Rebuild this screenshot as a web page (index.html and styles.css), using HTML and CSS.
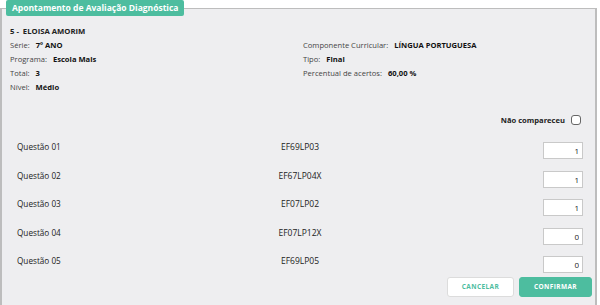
FILE: index.html
```html
<!DOCTYPE html>
<html lang="pt-BR">
<head>
    <meta charset="UTF-8">
    <title>Apontamento de Avaliação Diagnóstica</title>
    <link rel="stylesheet" href="styles.css">
</head>
<body>
    <fieldset class="panel">
        <legend class="panel-title">Apontamento de Avaliação Diagnóstica</legend>

        <div class="student">5 - &nbsp;ELOISA AMORIM</div>

        <div class="info">
            <div class="info-col">
                <div class="info-item"><span class="lbl">Série:</span><b>7º ANO</b></div>
                <div class="info-item"><span class="lbl">Programa:</span><b>Escola Mais</b></div>
                <div class="info-item"><span class="lbl">Total:</span><b>3</b></div>
                <div class="info-item"><span class="lbl">Nível:</span><b>Médio</b></div>
            </div>
            <div class="info-col">
                <div class="info-item"><span class="lbl">Componente Curricular:</span><b>LÍNGUA PORTUGUESA</b></div>
                <div class="info-item"><span class="lbl">Tipo:</span><b>Final</b></div>
                <div class="info-item"><span class="lbl">Percentual de acertos:</span><b>60,00 %</b></div>
            </div>
        </div>

        <div class="absent">
            <label for="absent">Não compareceu</label>
            <input type="checkbox" id="absent">
        </div>

        <div class="questions">
            <div class="q-row">
                <span class="q-name">Questão 01</span>
                <span class="q-code">EF69LP03</span>
                <input class="q-input" type="text" value="1">
            </div>
            <div class="q-row">
                <span class="q-name">Questão 02</span>
                <span class="q-code">EF67LP04X</span>
                <input class="q-input" type="text" value="1">
            </div>
            <div class="q-row">
                <span class="q-name">Questão 03</span>
                <span class="q-code">EF07LP02</span>
                <input class="q-input" type="text" value="1">
            </div>
            <div class="q-row">
                <span class="q-name">Questão 04</span>
                <span class="q-code">EF07LP12X</span>
                <input class="q-input" type="text" value="0">
            </div>
            <div class="q-row">
                <span class="q-name">Questão 05</span>
                <span class="q-code">EF69LP05</span>
                <input class="q-input" type="text" value="0">
            </div>
        </div>

        <div class="actions">
            <button class="btn btn-cancel">CANCELAR</button>
            <button class="btn btn-confirm">CONFIRMAR</button>
        </div>
    </fieldset>
</body>
</html>
```

FILE: styles.css
```css
body {
    margin: 0;
    background: #fff;
    font-family: "Open Sans", sans-serif;
    font-size: 8.5px;
    color: #222;
}
.panel {
    margin: 0;
    width: 597px;
    box-sizing: border-box;
    height: 310px;
    padding: 9px 0 0 0;
    background: #eeeef0;
    border: 1px solid #bdbdbd;
    border-right-width: 2px;
    border-left-width: 2px;
}
.panel-title {
    margin-left: 4px;
    padding: 0 6px;
    height: 16px;
    line-height: 16px;
    background: #4dbd9f;
    color: #fff;
    font-weight: bold;
    font-size: 8.5px;
    border-radius: 2px;
}
.student {
    padding-left: 8px;
    font-size: 7.7px;
    font-weight: bold;
    line-height: 13px;
}
.info {
    display: grid;
    grid-template-columns: 293px 1fr;
    padding-left: 8px;
    font-size: 7.6px;
}
.info-item {
    line-height: 14px;
}
.info-item .lbl {
    color: #444;
    margin-right: 6px;
}
.info-item b {
    color: #111;
}
.absent {
    display: flex;
    justify-content: flex-end;
    align-items: center;
    gap: 6px;
    margin-top: 21px;
    padding-right: 14px;
    font-size: 7.6px;
    font-weight: bold;
}
.absent input {
    appearance: none;
    margin: 0;
    width: 10px;
    height: 10px;
    border: 1px solid #666;
    border-radius: 3px;
    background: #fff;
}
.questions {
    margin-top: 16px;
    padding: 0 12px 0 15px;
}
.q-row {
    display: grid;
    grid-template-columns: 1fr auto 1fr;
    align-items: start;
    height: 28.5px;
}
.q-name {
    font-size: 8.2px;
    line-height: 12px;
}
.q-code {
    line-height: 12px;
}
.q-input {
    justify-self: end;
    width: 40px;
    height: 17px;
    box-sizing: border-box;
    margin-top: 1px;
    border: 1px solid #c9c9c9;
    background: #fff;
    text-align: right;
    padding: 0 3px;
    font-family: "Open Sans", sans-serif;
    font-size: 8px;
    color: #222;
}
.actions {
    display: flex;
    justify-content: flex-end;
    gap: 5px;
    padding-right: 3px;
    margin-top: -7px;
}
.btn {
    height: 20px;
    border-radius: 3px;
    font-family: "Open Sans", sans-serif;
    font-size: 6.5px;
    font-weight: bold;
    letter-spacing: 0.4px;
    cursor: pointer;
}
.btn-cancel {
    width: 67px;
    background: #fff;
    border: 1px solid #dcdcdc;
    color: #4dbd9f;
}
.btn-confirm {
    width: 73px;
    background: #4dbd9f;
    border: 1px solid #4dbd9f;
    color: #fff;
}
```
